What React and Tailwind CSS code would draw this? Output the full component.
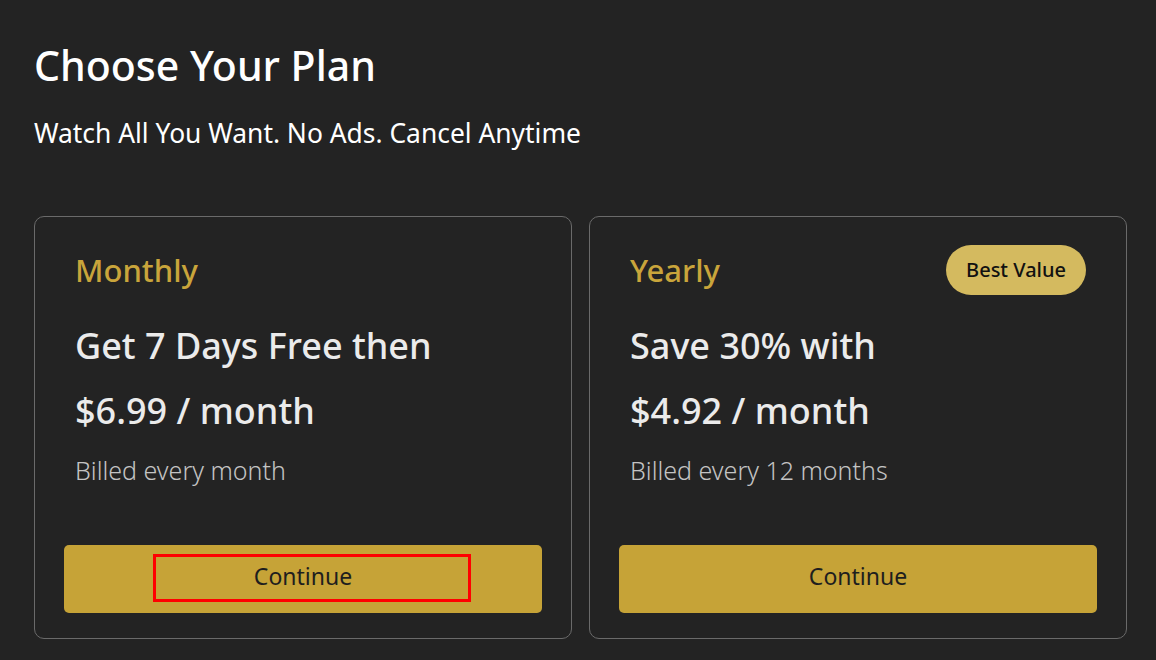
export default function App() {
  const plans = [
    {
      name: 'Monthly',
      line1: 'Get 7 Days Free then',
      price: '$6.99 / month',
      billed: 'Billed every month',
      badge: null,
      focused: true,
    },
    {
      name: 'Yearly',
      line1: 'Save 30% with',
      price: '$4.92 / month',
      billed: 'Billed every 12 months',
      badge: 'Best Value',
      focused: false,
    },
  ];

  return (
    <div
      className="h-[660px] bg-[#232323] px-[34px] pt-[38px] text-white"
      style={{ fontFamily: '"Noto Sans", "DejaVu Sans", sans-serif' }}
    >
      <h1 className="text-[41px] font-medium leading-[54px]">Choose Your Plan</h1>
      <p className="mt-[24px] text-[26.4px] leading-[34px]">Watch All You Want. No Ads. Cancel Anytime</p>

      <div className="mt-[66px] grid grid-cols-[538px_538px] gap-[17px]">
        {plans.map((plan) => (
          <div
            key={plan.name}
            className="flex h-[423px] flex-col rounded-[10px] border border-[#6a6a6a] px-[29px] pt-[28px] pb-[25px]"
          >
            <div className="flex h-[50px] items-center justify-between px-[11px]">
              <span className="text-[31px] font-medium text-[#c9a53b]">{plan.name}</span>
              {plan.badge && (
                <span className="flex h-[50px] items-center rounded-full bg-[#d4ba5f] px-[20px] text-[20px] font-medium text-[#111]">
                  {plan.badge}
                </span>
              )}
            </div>
            <div className="px-[11px]">
              <p className="mt-[26px] text-[36px] font-medium leading-[50px] text-[#ebebeb]">{plan.line1}</p>
              <p className="mt-[15px] text-[36px] font-medium leading-[50px] text-[#ebebeb]">{plan.price}</p>
              <p className="mt-[19px] text-[25px] font-light leading-[30px] text-[#c4c4c4]">{plan.billed}</p>
            </div>
            <button className="relative mt-auto flex h-[68px] w-full items-center justify-center rounded-[5px] bg-[#c6a337] pb-[6px] text-[23px] text-[#1e1e1e]">
              Continue
              {plan.focused && (
                <span className="absolute top-[9px] left-[89px] h-[48px] w-[318px] border-[3px] border-[#ff0000]" />
              )}
            </button>
          </div>
        ))}
      </div>
    </div>
  );
}
